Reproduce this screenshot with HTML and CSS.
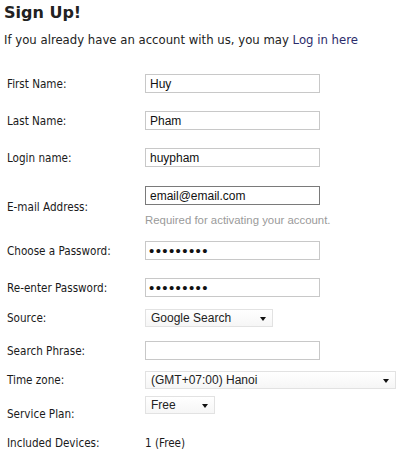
FILE: index.html
```html
<!DOCTYPE html>
<html lang="en">
<head>
    <meta charset="UTF-8">
    <meta name="viewport" content="width=device-width, initial-scale=1.0">
    <title>Sign Up</title>
    <link rel="stylesheet" href="styles.css">
</head>
<body>
    <h1>Sign Up!</h1>
    <p class="intro">If you already have an account with us, you may <a href="#">Log in here</a></p>

    <form class="signup">
        <div class="row">
            <label for="first">First Name:</label>
            <input type="text" id="first" value="Huy">
        </div>
        <div class="row">
            <label for="last">Last Name:</label>
            <input type="text" id="last" value="Pham">
        </div>
        <div class="row">
            <label for="login">Login name:</label>
            <input type="text" id="login" value="huypham">
        </div>
        <div class="row row-email">
            <label for="email">E-mail Address:</label>
            <div class="field">
                <input type="text" id="email" class="focused" value="email@email.com">
                <div class="hint">Required for activating your account.</div>
            </div>
        </div>
        <div class="row">
            <label for="pass">Choose a Password:</label>
            <input type="password" id="pass" value="123456789">
        </div>
        <div class="row">
            <label for="pass2">Re-enter Password:</label>
            <input type="password" id="pass2" value="123456789">
        </div>
        <div class="row row-select">
            <label for="source">Source:</label>
            <div class="select source">
                <select id="source">
                    <option>Google Search</option>
                </select>
            </div>
        </div>
        <div class="row">
            <label for="phrase">Search Phrase:</label>
            <input type="text" id="phrase">
        </div>
        <div class="row row-tz">
            <label for="tz">Time zone:</label>
            <div class="select tz">
                <select id="tz">
                    <option>(GMT+07:00) Hanoi</option>
                </select>
            </div>
        </div>
        <div class="row row-plan">
            <label for="plan">Service Plan:</label>
            <div class="select plan">
                <select id="plan">
                    <option>Free</option>
                </select>
            </div>
        </div>
        <div class="row row-devices">
            <label>Included Devices:</label>
            <span class="value">1 (Free)</span>
        </div>
    </form>
</body>
</html>
```

FILE: styles.css
```css
body {
    margin: 0;
    padding: 0 4px;
    background: #fff;
    color: #222;
    font-family: "DejaVu Sans", Verdana, sans-serif;
}
h1 {
    margin: 0;
    padding-top: 3px;
    font-size: 16px;
    line-height: 20px;
    color: #222;
}
.intro {
    margin: 9px 0 0;
    font-size: 11.7px;
    line-height: 16px;
    color: #222;
}
.intro a {
    color: #2b2b6b;
    text-decoration: none;
}
.signup {
    margin-top: 17px;
    padding-left: 3px;
}
.row {
    display: flex;
    align-items: center;
    padding: 9px 0;
}
.row label {
    width: 138px;
    flex-shrink: 0;
    font-family: "DejaVu Sans Condensed", "DejaVu Sans", sans-serif;
    font-stretch: condensed;
    font-size: 11.6px;
    color: #1a1a1a;
}
input {
    box-sizing: border-box;
    width: 175px;
    height: 19px;
    margin: 0;
    padding: 0 4px;
    border: 1px solid #c8c8c8;
    background: #fff;
    font-family: "Liberation Sans", Arial, sans-serif;
    font-size: 12px;
    color: #111;
    outline: none;
}
input.focused {
    border-color: #7a7a7a;
}
input[type="password"] {
    font-size: 15px;
    letter-spacing: 1.4px;
    padding-left: 3px;
}
.field input {
    display: block;
}
.row-email {
    padding: 10px 0 5px;
}
.hint {
    margin-top: 8px;
    font-family: "Liberation Sans", Arial, sans-serif;
    font-size: 11.4px;
    line-height: 14px;
    color: #9a9a9a;
}
.row-select {
    padding: 3px 0 5px;
}
.row-tz {
    padding: 2px 0;
}
.row-plan {
    align-items: flex-start;
    height: 44px;
    padding: 0;
}
.row-plan label {
    align-self: center;
    padding-top: 1px;
}
.row-plan .select {
    margin-top: 5px;
}
.row-devices {
    padding: 0;
    height: 16px;
}
.value {
    font-family: "DejaVu Sans Condensed", "DejaVu Sans", sans-serif;
    font-stretch: condensed;
    font-size: 11.6px;
    color: #1a1a1a;
}
.select {
    position: relative;
}
.select::after {
    content: "";
    position: absolute;
    right: 7px;
    top: 8px;
    border-left: 3px solid transparent;
    border-right: 3px solid transparent;
    border-top: 4px solid #111;
    pointer-events: none;
}
.select select {
    appearance: none;
    -webkit-appearance: none;
    display: block;
    box-sizing: border-box;
    width: 100%;
    height: 18px;
    margin: 0;
    padding: 0 4px 0 5px;
    border: 1px solid #e2e2e2;
    border-radius: 0;
    background: linear-gradient(#fff, #f6f6f6);
    font-family: "Liberation Sans", Arial, sans-serif;
    font-size: 12px;
    color: #222;
    outline: none;
}
.source {
    width: 128px;
}
.tz {
    width: 253px;
}
.plan {
    width: 70px;
}
```
